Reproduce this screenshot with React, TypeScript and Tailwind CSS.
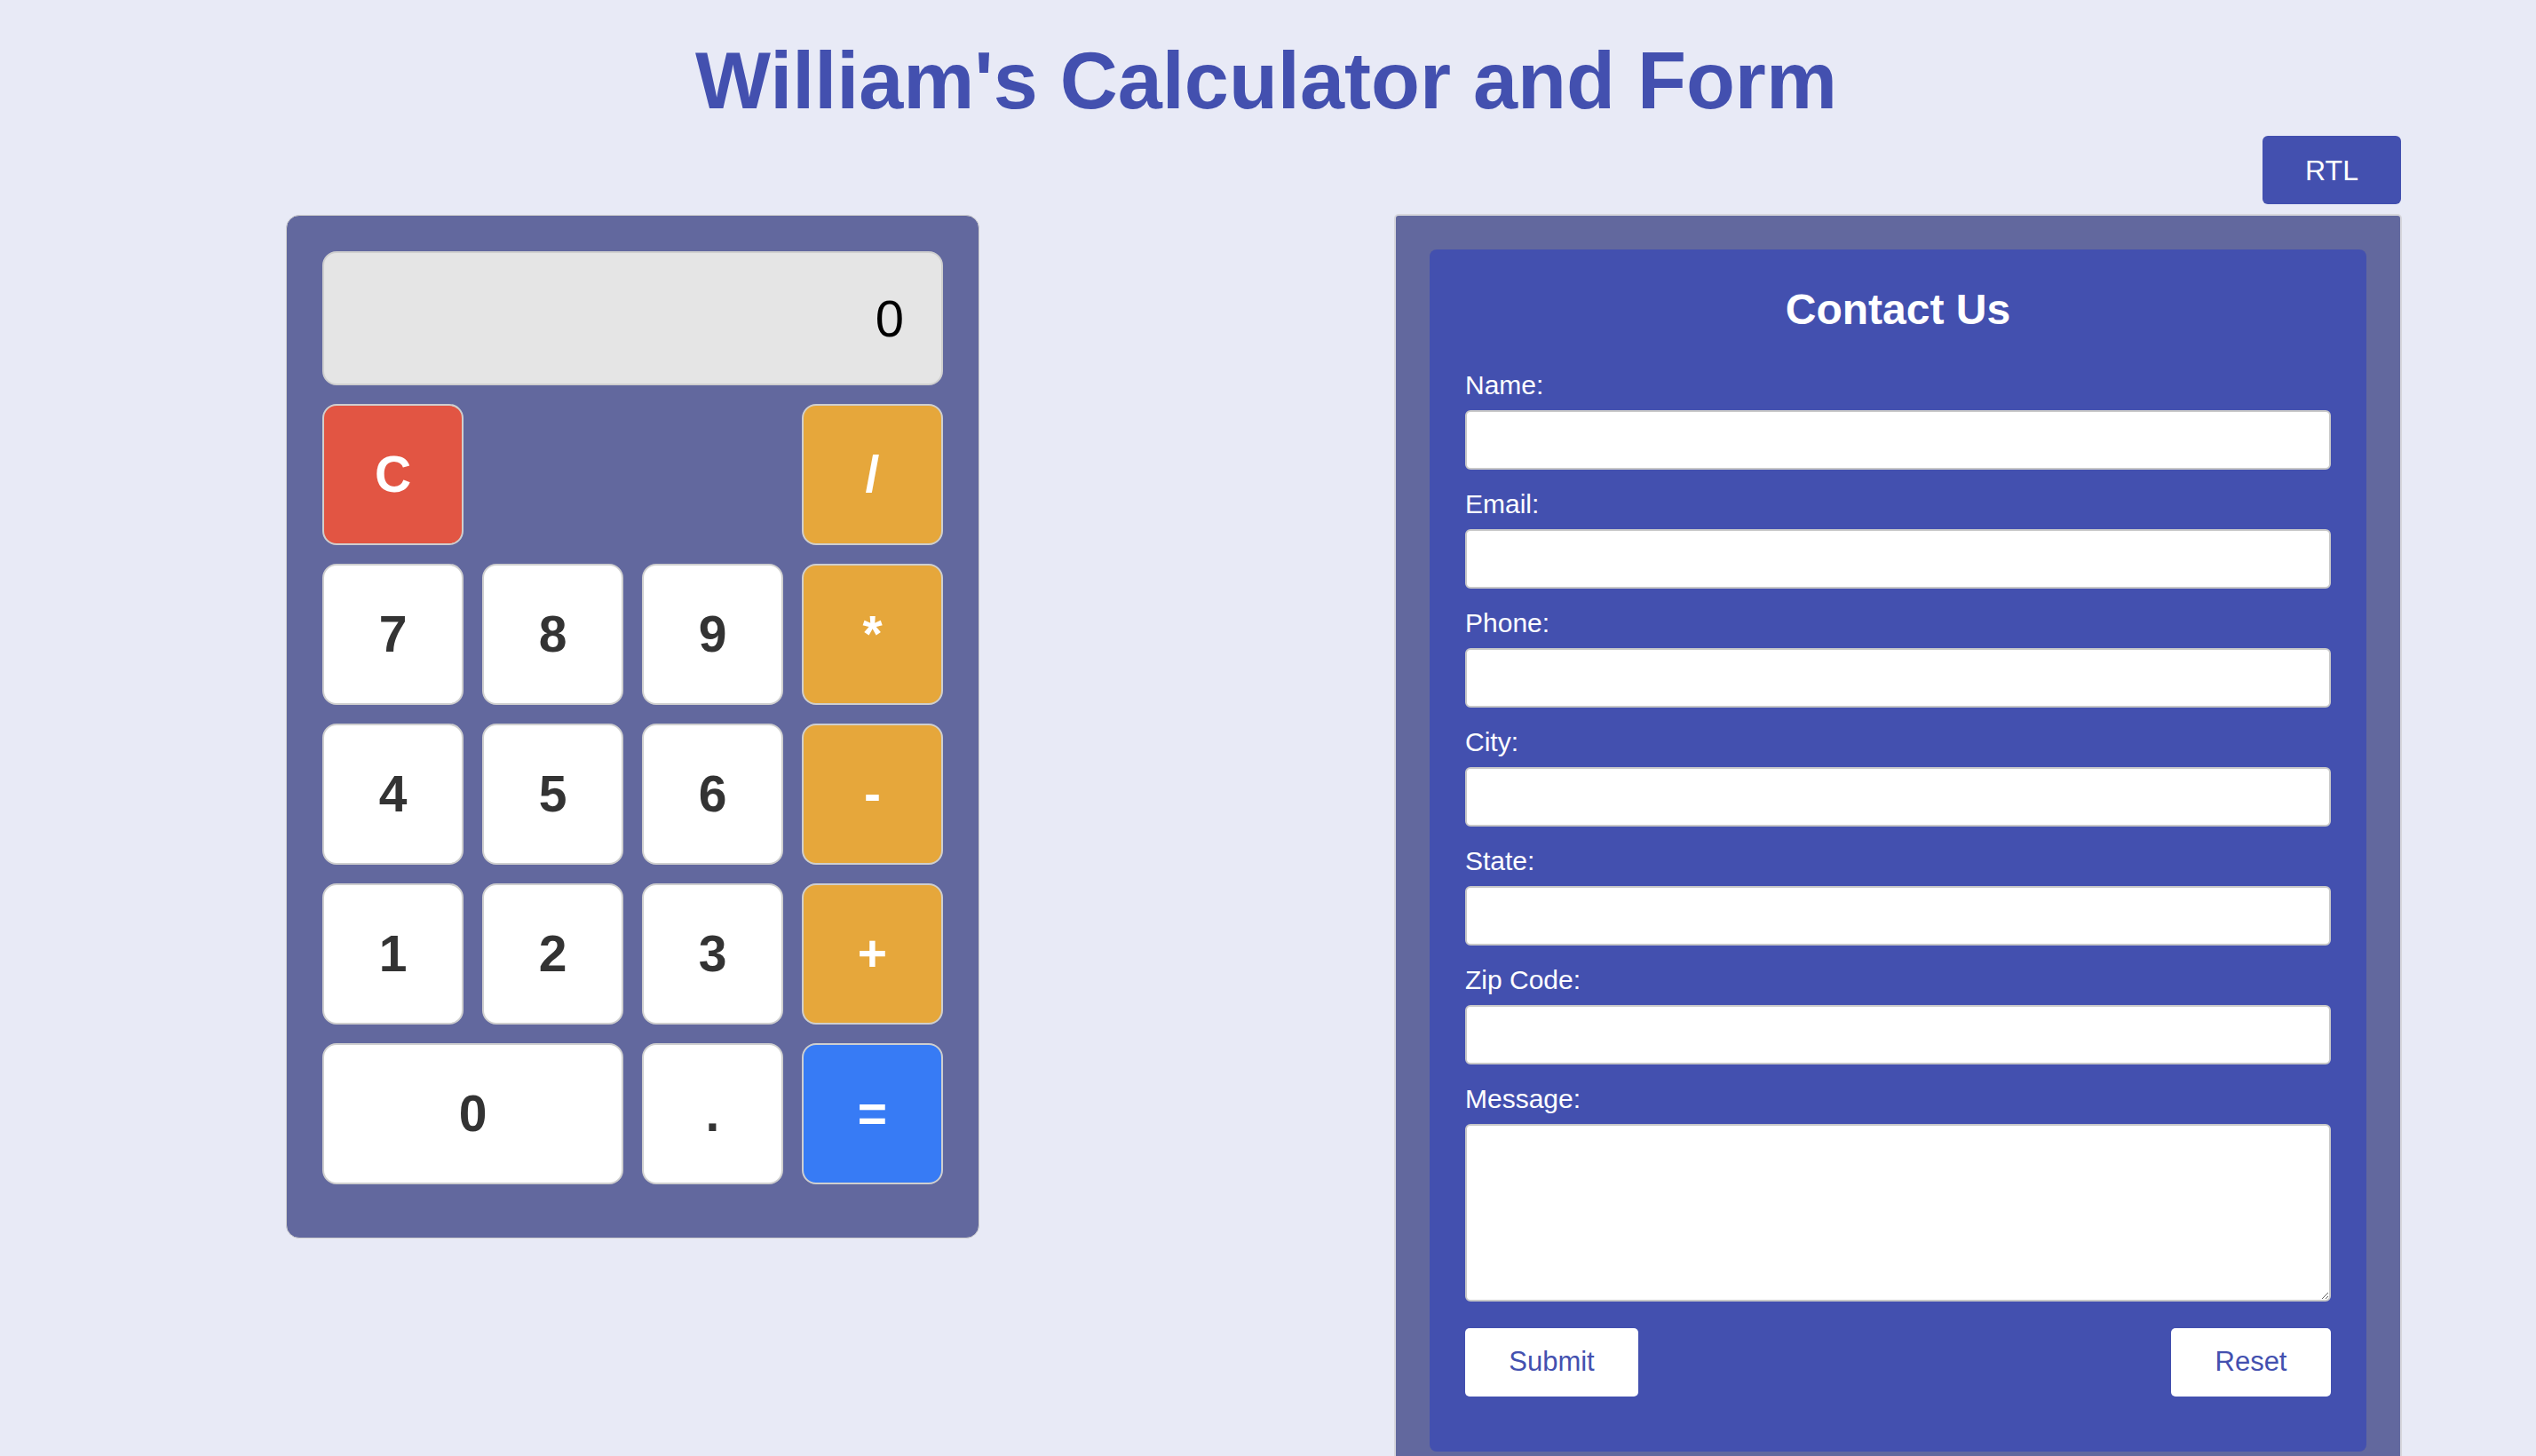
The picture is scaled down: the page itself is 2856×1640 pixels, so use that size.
import React from "react";

const font = { fontFamily: '"Liberation Sans", Arial, sans-serif' };

function Key({
  label,
  kind,
  span,
}: {
  label: string;
  kind: "num" | "op" | "clear" | "eq" | "empty";
  span?: boolean;
}) {
  if (kind === "empty") return <div />;
  const color =
    kind === "num"
      ? "bg-white text-[#333333]"
      : kind === "op"
      ? "bg-[#e6a73b] text-white"
      : kind === "clear"
      ? "bg-[#e25543] text-white"
      : "bg-[#377bf5] text-white";
  return (
    <button
      className={`${color} ${span ? "col-span-2" : ""} h-[159px] rounded-[16px] border-2 border-[#cfcfcf] text-[57px] font-bold flex items-center justify-center`}
    >
      {label}
    </button>
  );
}

export default function App() {
  const fields = ["Name:", "Email:", "Phone:", "City:", "State:", "Zip Code:"];
  return (
    <div className="h-[1640px] overflow-hidden bg-[#e8eaf6]" style={font}>
      <h1 className="text-center text-[90px] leading-[90px] font-bold text-[#4350af] pt-[46px] pr-[4px]">
        William's Calculator and Form
      </h1>
      <div className="flex justify-end pr-[152px] mt-[17px]">
        <button className="w-[156px] h-[77px] rounded-[6px] bg-[#4350af] text-white text-[32px]">
          RTL
        </button>
      </div>
      <div className="flex items-start mt-[12px] pl-[322px]">
        {/* Calculator */}
        <div className="w-[781px] bg-[#62689e] border border-[#cfcfcf] rounded-[15px] px-[40px] pt-[40px] pb-[60px]">
          <div className="h-[151px] bg-[#e5e5e5] border-2 border-[#cfcfcf] rounded-[16px] flex items-center justify-end pr-[42px] text-[58px] text-black">
            0
          </div>
          <div className="grid grid-cols-4 gap-[21px] mt-[21px]">
            <Key label="C" kind="clear" />
            <Key label="" kind="empty" />
            <Key label="" kind="empty" />
            <Key label="/" kind="op" />
            <Key label="7" kind="num" />
            <Key label="8" kind="num" />
            <Key label="9" kind="num" />
            <Key label="*" kind="op" />
            <Key label="4" kind="num" />
            <Key label="5" kind="num" />
            <Key label="6" kind="num" />
            <Key label="-" kind="op" />
            <Key label="1" kind="num" />
            <Key label="2" kind="num" />
            <Key label="3" kind="num" />
            <Key label="+" kind="op" />
            <Key label="0" kind="num" span />
            <Key label="." kind="num" />
            <Key label="=" kind="eq" />
          </div>
        </div>

        {/* Form */}
        <div className="ml-[467px] -mt-[1px] w-[1135px] bg-[#62689e] border-2 border-[#d6d6dc] rounded-[5px] p-[38px]">
          <div className="bg-[#4350af] rounded-[8px] px-[40px] pt-[40px] pb-[62px]">
            <h2 className="text-center text-white text-[48px] leading-[55px] font-bold mb-[41px]">
              Contact Us
            </h2>
            {fields.map((f) => (
              <div key={f}>
                <label className="block text-white text-[30px] leading-[33px] mb-[12px]">
                  {f}
                </label>
                <input
                  type="text"
                  className="block w-full h-[67px] bg-white border-2 border-[#c8c8c8] rounded-[6px] mb-[22px]"
                />
              </div>
            ))}
            <label className="block text-white text-[30px] leading-[33px] mb-[12px]">
              Message:
            </label>
            <textarea className="block w-full h-[200px] bg-white border-2 border-[#c8c8c8] rounded-[6px]" />
            <div className="flex justify-between mt-[30px]">
              <button className="w-[195px] h-[77px] bg-white rounded-[5px] text-[31px] text-[#4350af]">
                Submit
              </button>
              <button className="w-[180px] h-[77px] bg-white rounded-[5px] text-[31px] text-[#4350af]">
                Reset
              </button>
            </div>
          </div>
        </div>
      </div>
    </div>
  );
}
